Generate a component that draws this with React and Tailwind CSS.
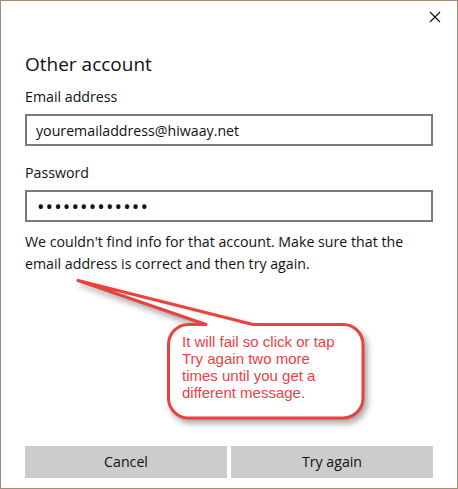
import { useState } from 'react'

const FONT = '"Open Sans", "Noto Sans", sans-serif'

function CloseGlyph() {
  return (
    <svg width="12" height="12" viewBox="0 0 12 12" className="block">
      <path d="M1 1 L11 11 M11 1 L1 11" stroke="#111" strokeWidth="1.1" fill="none" />
    </svg>
  )
}

// Red speech-bubble annotation laid over the dialog
function Callout() {
  return (
    <div className="absolute left-[60px] top-[270px] w-[320px] h-[160px] pointer-events-none">
      <svg
        width="320"
        height="160"
        viewBox="0 0 320 160"
        className="absolute inset-0"
        style={{ filter: 'drop-shadow(3px 4px 3px rgba(0,0,0,0.35))' }}
      >
        <path
          d="M145 53.5 L17 9.5 L192 53.5 L282 53.5 A20 20 0 0 1 302 73.5 L302 127 A20 20 0 0 1 282 147 L128 147 A20 20 0 0 1 107.5 127 L107.5 73.5 A20 20 0 0 1 128 53.5 Z"
          fill="#ffffff"
          stroke="#e8433d"
          strokeWidth="3"
          strokeLinejoin="round"
        />
      </svg>
      <p
        className="absolute left-[121px] top-[62px] w-[160px] text-[15px] leading-[17px] text-[#ec3f45]"
        style={{ fontFamily: '"Liberation Sans", Arial, sans-serif' }}
      >
        It will fail so click or tap Try again two more times until you get a different message.
      </p>
    </div>
  )
}

export default function App() {
  const [email, setEmail] = useState('youremailaddress@hiwaay.net')
  const [password, setPassword] = useState('abcdefghijklm')

  return (
    <div
      className="relative w-[458px] h-[489px] bg-white border border-[#a48b75] flex flex-col text-[#1a1a1a]"
      style={{ fontFamily: FONT }}
    >
      <button className="absolute right-[16px] top-[10px] p-0" aria-label="Close">
        <CloseGlyph />
      </button>

      <div className="flex flex-col px-[24px] pt-[49px]">
        <h1 className="text-[19px] leading-[28px] font-normal text-[#111]">Other account</h1>

        <label className="mt-[9px] text-[14.2px] leading-[20px] text-[#111]">Email address</label>
        <input
          value={email}
          onChange={e => setEmail(e.target.value)}
          className="mt-[7px] h-[32px] w-[408px] border-2 border-[#7a7a7a] px-[9px] text-[14.2px] text-[#111] outline-none"
        />

        <label className="mt-[17px] text-[14.2px] leading-[20px] text-[#111]">Password</label>
        <input
          type="password"
          value={password}
          onChange={e => setPassword(e.target.value)}
          className="mt-[7px] h-[32px] w-[408px] border-2 border-[#7a7a7a] pl-[10px] pr-[9px] text-[20px] tracking-[1.1px] text-[#111] outline-none"
        />

        <p className="mt-[9px] text-[14.2px] leading-[22px] text-[#111]">
          We couldn't find info for that account. Make sure that the email address is correct and then try again.
        </p>
      </div>

      <div className="mt-auto mb-[10px] flex gap-[4px] px-[24px]">
        <button className="h-[32px] flex-1 bg-[#cccccc] text-[14.2px] text-[#111]">Cancel</button>
        <button className="h-[32px] flex-1 bg-[#cccccc] text-[14.2px] text-[#111]">Try again</button>
      </div>

      <Callout />
    </div>
  )
}
